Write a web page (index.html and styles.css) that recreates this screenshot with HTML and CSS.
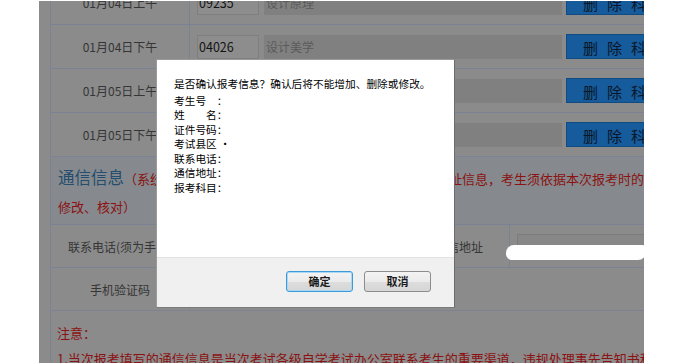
FILE: index.html
```html
<!DOCTYPE html>
<html lang="zh-CN">
<head>
<meta charset="utf-8">
<title>报考确认</title>
<link rel="stylesheet" href="styles.css">
</head>
<body>
<div class="page">
  <div class="table">
    <div class="row date-row">
      <div class="label">01月04日上午</div>
      <div class="value"><span class="code">09235</span><span class="name">设计原理</span><span class="del">删除科目</span></div>
    </div>
    <div class="row date-row">
      <div class="label">01月04日下午</div>
      <div class="value"><span class="code">04026</span><span class="name">设计美学</span><span class="del">删除科目</span></div>
    </div>
    <div class="row date-row">
      <div class="label">01月05日上午</div>
      <div class="value"><span class="code">09236</span><span class="name">中外美术史</span><span class="del">删除科目</span></div>
    </div>
    <div class="row date-row">
      <div class="label">01月05日下午</div>
      <div class="value"><span class="code">04027</span><span class="name">设计基础</span><span class="del">删除科目</span></div>
    </div>
    <div class="section">
      <div class="line"><span class="title">通信信息</span><span class="hint">（系统已自动读取显示考生上一次报考时所填写的通信地址信息，考生须依据本次报考时的实际情况进行</span></div>
      <div class="line"><span class="hint">修改、核对）</span></div>
    </div>
    <div class="row form-row">
      <div class="label">联系电话(须为手机)</div>
      <div class="mid"><span class="input"></span></div>
      <div class="label2">通信地址</div>
      <div class="value2"><span class="input wide"></span><span class="redact"></span></div>
    </div>
    <div class="row form-row">
      <div class="label">手机验证码</div>
      <div class="mid-wide"></div>
    </div>
    <div class="notes">
      <p class="note">注意：</p>
      <p class="note">1.当次报考填写的通信信息是当次考试各级自学考试办公室联系考生的重要渠道，违规处理事先告知书和处理决定书将按此地址寄送。</p>
    </div>
  </div>
  <div class="dialog">
    <div class="dialog-body">
      <p class="msg first">是否确认报考信息？确认后将不能增加、删除或修改。</p>
      <p class="msg">考生号　：</p>
      <p class="msg">姓　　名：</p>
      <p class="msg">证件号码：</p>
      <p class="msg">考试县区<span class="dot">·</span></p>
      <p class="msg">联系电话：</p>
      <p class="msg">通信地址：</p>
      <p class="msg">报考科目：</p>
    </div>
    <div class="dialog-foot">
      <button class="btn focus">确定</button>
      <button class="btn">取消</button>
    </div>
  </div>
</div>
</body>
</html>
```
FILE: styles.css
```css
html, body {
  margin: 0;
  padding: 0;
  background: #ffffff;
}
body {
  font-family: "Noto Sans CJK SC", "Noto Sans", sans-serif;
}
.page {
  position: relative;
  margin: 1px 0 0 39px;
  width: 605px;
  height: 362px;
  background: #8b8b8b;
  overflow: hidden;
}
.table {
  margin: -20px 0 0 11px;
  width: 720px;
  border-left: 1px solid #7a8293;
}
.row {
  display: flex;
  box-sizing: border-box;
  border-bottom: 1px solid #7a8293;
}
.date-row {
  height: 44px;
}
.form-row {
  height: 43px;
}
.label {
  flex: 0 0 138px;
  display: flex;
  align-items: center;
  justify-content: center;
  border-right: 1px solid #7a8293;
  font-size: 12px;
  color: #353535;
  white-space: nowrap;
}
.value {
  flex: 1;
  display: flex;
  align-items: center;
  padding-left: 7px;
  gap: 5px;
}
.code {
  box-sizing: border-box;
  width: 62px;
  height: 24px;
  border: 1px solid #7f7f7f;
  background: #8d8d8d;
  font-size: 12.5px;
  line-height: 22px;
  padding-left: 1px;
  color: #131313;
}
.name {
  box-sizing: border-box;
  width: 298px;
  height: 24px;
  background: #808080;
  font-size: 12px;
  line-height: 24px;
  padding-left: 2px;
  color: #5a5a5a;
}
.del {
  box-sizing: border-box;
  margin-left: -1px;
  width: 130px;
  height: 25px;
  background: #165b9c;
  border: 1px solid #104b82;
  font-size: 15px;
  line-height: 25px;
  letter-spacing: 9px;
  padding-left: 16px;
  color: #0a1728;
  white-space: nowrap;
}
.section {
  box-sizing: border-box;
  height: 68px;
  padding: 6px 0 0 7px;
  background: #868a8e;
  border-bottom: 1px solid #7a8293;
}
.line {
  height: 28px;
  line-height: 28px;
  white-space: nowrap;
}
.title {
  font-size: 16.5px;
  color: #244d6e;
}
.hint {
  font-size: 13px;
  color: #8a1212;
}
.mid {
  flex: 0 0 219px;
  display: flex;
  align-items: center;
}
.label2 {
  flex: 0 0 100px;
  display: flex;
  align-items: center;
  justify-content: center;
  border-right: 1px solid #7a8293;
  font-size: 12px;
  color: #353535;
}
.value2 {
  position: relative;
  flex: 1;
  display: flex;
  align-items: center;
  padding-left: 7px;
}
.input {
  box-sizing: border-box;
  display: block;
  width: 180px;
  height: 24px;
  border: 1px solid #7c7c7c;
  background: #878787;
}
.input.wide {
  width: 200px;
}
.redact {
  position: absolute;
  left: -4px;
  top: 20px;
  width: 140px;
  height: 15px;
  background: #ffffff;
  border-radius: 8px 4px 8px 6px;
}
.mid-wide {
  flex: 1;
}
.notes {
  padding: 11px 0 0 6px;
}
.note {
  margin: 0;
  height: 26px;
  line-height: 22px;
  font-size: 13px;
  color: #8a1212;
  white-space: nowrap;
}
.dialog {
  position: absolute;
  left: 117px;
  top: 58px;
  box-sizing: border-box;
  width: 299px;
  height: 249px;
  display: flex;
  flex-direction: column;
  background: #ffffff;
  border: 1px solid #9a9a9a;
  border-right-color: #6c6c6c;
  border-bottom-color: #7a7a7a;
}
.dialog-body {
  flex: 1;
  padding: 17px 0 0 17px;
}
.msg {
  margin: 0;
  font-size: 10.7px;
  line-height: 14.5px;
  color: #000000;
  white-space: nowrap;
}
.msg.first {
  margin-bottom: 2px;
}
.dot {
  padding-left: 3px;
}
.dialog-foot {
  box-sizing: border-box;
  height: 50px;
  display: flex;
  justify-content: flex-end;
  align-items: flex-start;
  gap: 11px;
  padding: 13px 23px 0 0;
  background: #f0f0f0;
  border-top: 1px solid #e2e2e2;
}
.btn {
  box-sizing: border-box;
  width: 67px;
  height: 21px;
  padding: 0;
  border: 1px solid #8c8c8c;
  border-radius: 3px;
  background: linear-gradient(#f3f3f3 0%, #ebebeb 50%, #dddddd 51%, #d6d6d6 100%);
  font-family: "Noto Sans CJK SC", sans-serif;
  font-size: 11px;
  font-weight: bold;
  color: #1a1a1a;
  line-height: 19px;
}
.btn.focus {
  border-color: #3d9ad8;
  box-shadow: inset 0 0 0 1px #a9d8f5;
}
```
